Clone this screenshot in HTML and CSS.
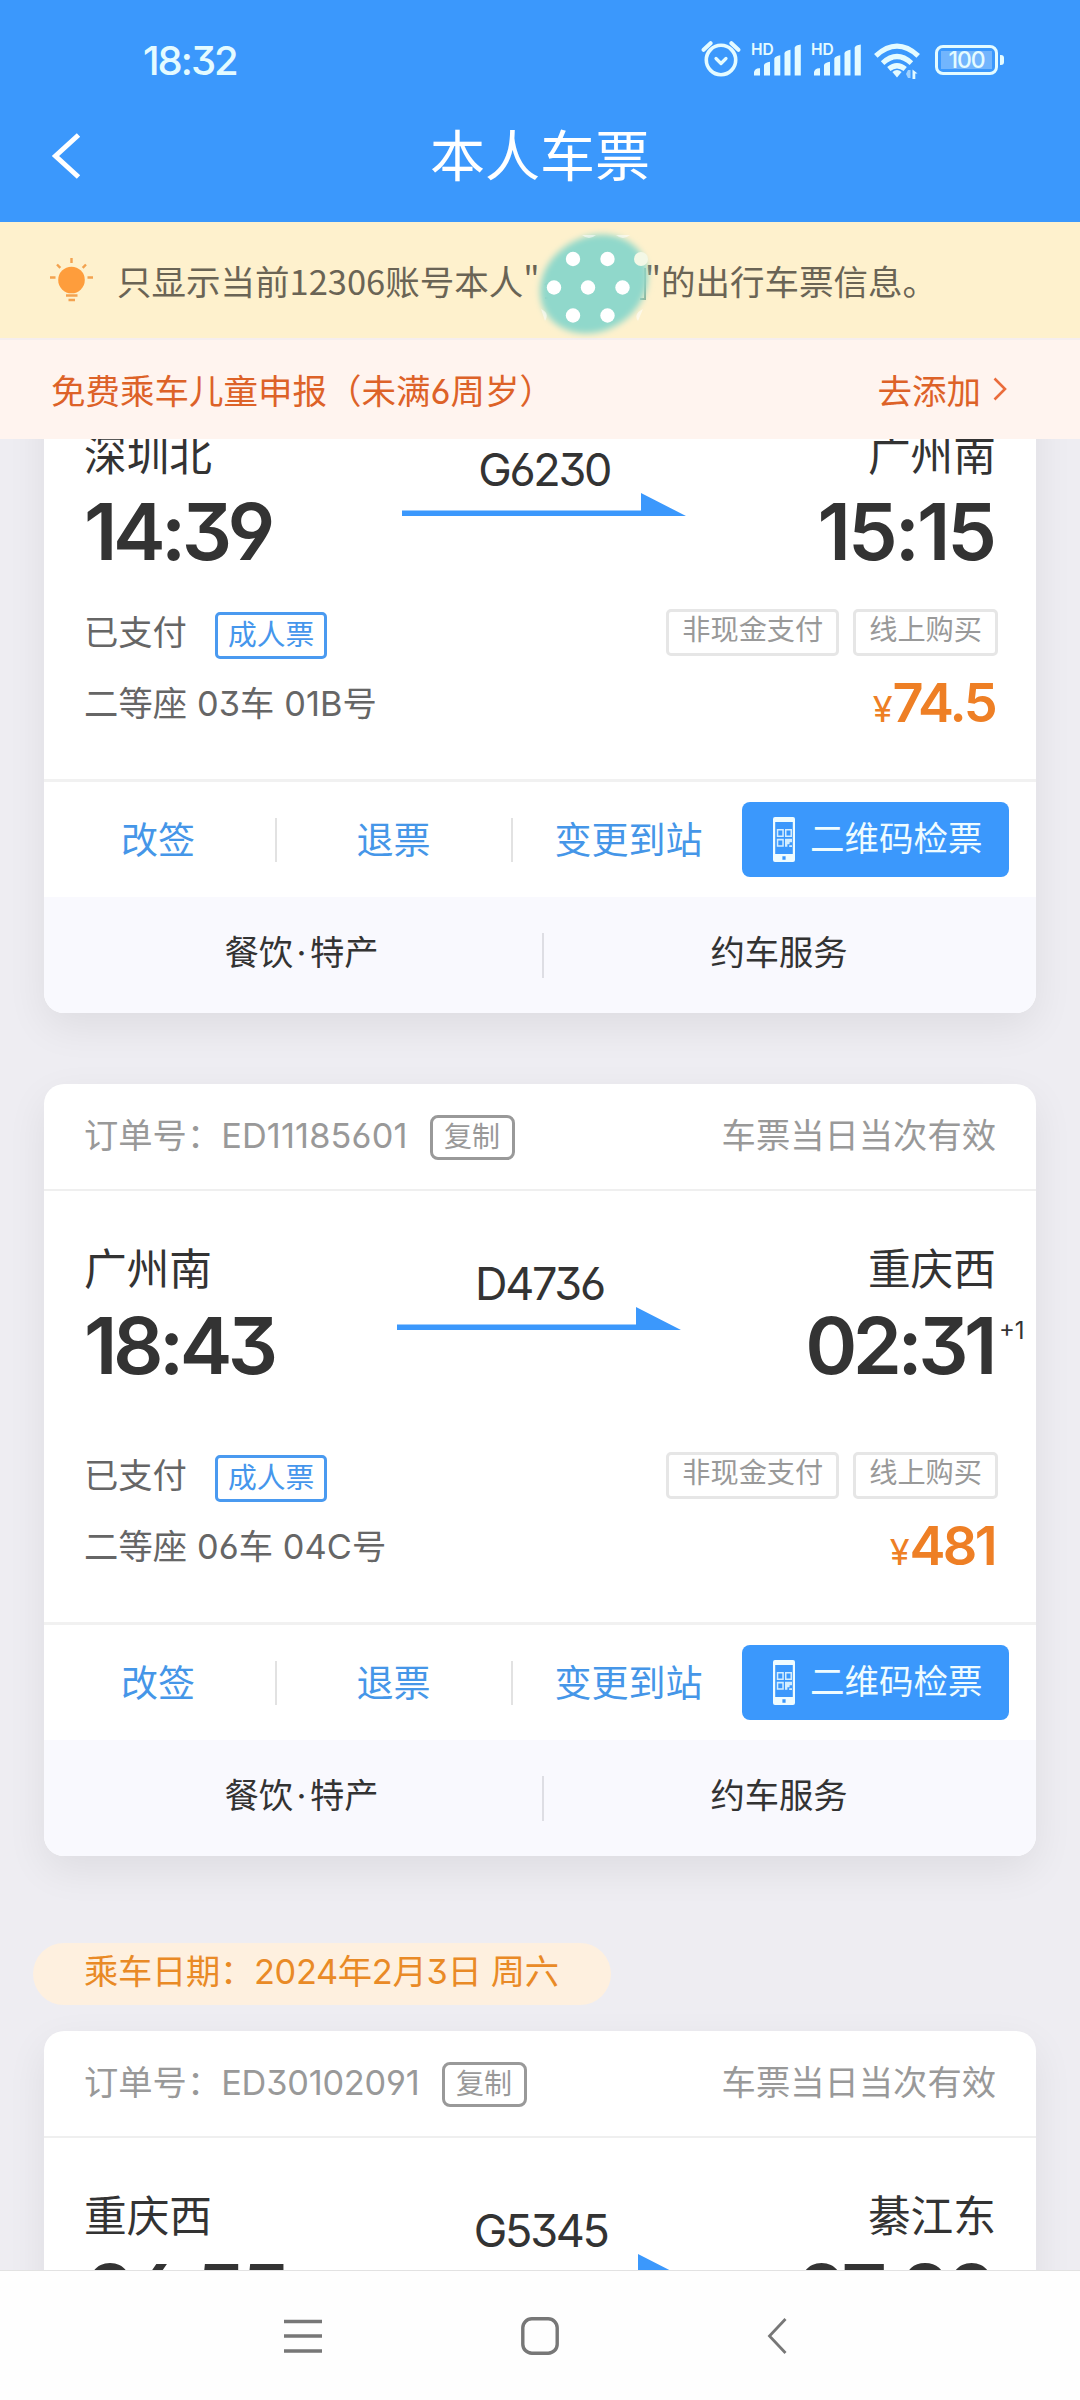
FILE: index.html
```html
<!DOCTYPE html>
<html lang="zh-CN">
<head>
<meta charset="utf-8">
<title>本人车票</title>
<link rel="stylesheet" href="styles.css">
</head>
<body>
<svg class="defs" width="0" height="0" aria-hidden="true">
  <symbol id="arrow" viewBox="0 0 284 23"><path d="M0 17.5h239V0l45 23H0z"/></symbol>
  <symbol id="phone" viewBox="0 0 22 45">
    <path fill-rule="evenodd" d="M2 0h18q2 0 2 2v41q0 2-2 2H2q-2 0-2-2V2q0-2 2-2zM2.2 5v32h17.6V5zM9.4 39.3v3.4h3.2v-3.4z"/>
    <path fill-rule="evenodd" d="M3.8 12h7v8h-7zM5.3 13.6v4.8h4v-4.8zM12 12h7v8h-7zM13.5 13.6v4.8h4v-4.8zM3.8 21.8h7v8h-7zM5.3 23.4v4.8h4v-4.8zM12 21.8h7v3.4h-2.400v2H14.400v2.600H12zM16.200 28.200H19V30h-2.800z" opacity=".85"/>
  </symbol>
  <symbol id="signal" viewBox="0 0 48 32">
    <path d="M0 31.5v-3.5q1-3.8 5-3.8h1v7.300zM10 31.500V21q1-2.500 6-3.200v13.700zM20.300 31.500v-17q1-2.500 6-3.200v20.200zM30.500 31.500V9q1-2.500 6-3.200v25.700zM40.700 31.500V3.500Q41.500 1 46.800.5v31z"/>
  </symbol>
</svg>

<header class="top">
  <div class="status">
    <span class="clock">18:32</span>
    <div class="status-icons">
      <svg class="i-alarm" width="40" height="38" viewBox="0 0 40 38"><g fill="none" stroke="#e4fbff" stroke-linecap="round" stroke-linejoin="round"><circle cx="20" cy="21" r="14.700" stroke-width="3.600"/><path d="M2.600 10.800 9.600 4.200M37.400 10.800 30.400 4.200" stroke-width="4"/><path d="m15 19.500 5 5 5-5" stroke-width="3.200"/></g></svg>
      <span class="sim"><b>HD</b><svg width="48" height="32"><use href="#signal"/></svg></span>
      <span class="sim"><b>HD</b><svg width="48" height="32"><use href="#signal"/></svg></span>
      <svg class="i-wifi" width="48" height="36" viewBox="0 0 48 36"><g fill="none" stroke="#e4fbff" stroke-width="5.200"><path d="M1.800 12.800Q23 -6.500 44.200 12.800"/><path d="M8.600 20.100Q23 7 37.400 20.100"/><path d="M14.800 26Q23 19.500 31.200 26"/></g><path d="M23 34.500l-4.600-5.500q4.600-3.800 9.200 0z" fill="#e4fbff"/><path d="M36.500 27v8h-2.500l-2-4 2-4z" fill="#9fd2ff"/><path d="M38.500 36v-9.500l5 4h-2.200V36z" fill="#e4fbff"/></svg>
      <span class="battery"><i>100</i></span>
    </div>
  </div>
  <div class="titlebar">
    <svg class="back" width="32" height="46" viewBox="0 0 32 46"><path d="M29.500 2 6.500 23l23 21" fill="none" stroke="#fff" stroke-width="5"/></svg>
    <h1>本人车票</h1>
  </div>
</header>

<section class="notice">
  <svg width="44" height="46" viewBox="0 0 44 46"><circle cx="22.500" cy="23" r="13.300" fill="#fe9d3c"/><path d="M17 38.500h11.500M19.500 43h6.500M22.500 1v5M8 7.500l3.300 3.300M37 7.500l-3.300 3.300M1 20.500h5.500M38.500 20.500H44" fill="none" stroke="#f3a24f" stroke-width="2.400"/></svg>
  <p>只显示当前12306账号本人"<span class="masked"><svg width="124" height="112" viewBox="0 0 124 112"><defs><filter id="soft" x="-20%" y="-20%" width="140%" height="140%"><feGaussianBlur stdDeviation="3"/></filter></defs><path d="M13 57l9-7M13 70h8M113 40v31h-5" fill="none" stroke="#8fae93" stroke-width="2"/><ellipse cx="62" cy="56" rx="56" ry="47" transform="rotate(-30 62 56)" fill="#90d8cb" filter="url(#soft)"/><g fill="#fff"><circle cx="41" cy="31" r="7.200"/><circle cx="75.500" cy="31" r="7.200"/><circle cx="109" cy="31" r="7" fill="#f3f8e6"/><circle cx="22" cy="59.500" r="7.200"/><circle cx="56" cy="59.500" r="7.200"/><circle cx="90.500" cy="59.500" r="7.200"/><circle cx="41" cy="87.500" r="7.200"/><circle cx="75.500" cy="87.500" r="7.200"/><path d="M50 7q7 6 14 0zM84 7q7 6 14 0zM9 81q9 4 4 12zM111 81q-10 5-5 12z" opacity=".55"/></g></svg></span>"的出行车票信息。</p>
</section>

<section class="child-bar">
  <span>免费乘车儿童申报（未满6周岁）</span>
  <span class="add">去添加<svg width="15" height="24" viewBox="0 0 15 24"><path d="M1.500 1.500 12 12 1.500 22.500" fill="none" stroke="#ea6c3c" stroke-width="2.600"/></svg></span>
</section>

<main class="scroller">
  <article class="card first">
    <div class="journey">
      <div class="stop"><span class="station">深圳北</span><span class="time">14:39</span></div>
      <div class="train"><span>G6230</span><svg width="284" height="23"><use href="#arrow"/></svg></div>
      <div class="stop end"><span class="station">广州南</span><span class="time loose">15:15</span></div>
    </div>
    <div class="info">
      <span class="state">已支付</span><span class="tag blue">成人票</span>
      <span class="tags"><span class="tag">非现金支付</span><span class="tag">线上购买</span></span>
    </div>
    <div class="seat-row"><span class="seat">二等座 03车 01B号</span><span class="price"><small>¥</small>74.5</span></div>
    <div class="actions">
      <a class="act a1">改签</a><a class="act a2">退票</a><a class="act a3">变更到站</a>
      <a class="qr"><svg width="22" height="45"><use href="#phone"/></svg><span>二维码检票</span></a>
    </div>
    <div class="services"><a class="s1">餐饮<i>·</i>特产</a><a class="s2">约车服务</a></div>
  </article>

  <article class="card second">
    <div class="order"><span>订单号：<em>ED11185601</em></span><span class="copy">复制</span><span class="valid">车票当日当次有效</span></div>
    <div class="journey">
      <div class="stop"><span class="station">广州南</span><span class="time">18:43</span></div>
      <div class="train"><span>D4736</span><svg width="284" height="23"><use href="#arrow"/></svg></div>
      <div class="stop end"><span class="station">重庆西</span><span class="time">02:31<sup>+1</sup></span></div>
    </div>
    <div class="info roomy">
      <span class="state">已支付</span><span class="tag blue">成人票</span>
      <span class="tags"><span class="tag">非现金支付</span><span class="tag">线上购买</span></span>
    </div>
    <div class="seat-row"><span class="seat">二等座 06车 04C号</span><span class="price"><small>¥</small>481</span></div>
    <div class="actions">
      <a class="act a1">改签</a><a class="act a2">退票</a><a class="act a3">变更到站</a>
      <a class="qr"><svg width="22" height="45"><use href="#phone"/></svg><span>二维码检票</span></a>
    </div>
    <div class="services"><a class="s1">餐饮<i>·</i>特产</a><a class="s2">约车服务</a></div>
  </article>

  <div class="date"><span>乘车日期：2024年2月3日 周六</span></div>

  <article class="card third">
    <div class="order"><span>订单号：<em>ED30102091</em></span><span class="copy">复制</span><span class="valid">车票当日当次有效</span></div>
    <div class="journey">
      <div class="stop"><span class="station">重庆西</span><span class="time">06:55</span></div>
      <div class="train"><span>G5345</span><svg width="284" height="23"><use href="#arrow"/></svg></div>
      <div class="stop end"><span class="station">綦江东</span><span class="time">07:20</span></div>
    </div>
  </article>
</main>

<nav class="sysnav">
  <svg width="38" height="34" viewBox="0 0 38 34"><path d="M0 2.500h38M0 17h38M0 32h38" stroke="#777" stroke-width="3.400"/></svg>
  <svg width="38" height="38" viewBox="0 0 38 38"><rect x="1.800" y="1.800" width="34.400" height="34.400" rx="9" fill="none" stroke="#777" stroke-width="3.400"/></svg>
  <svg width="20" height="36" viewBox="0 0 20 36"><path d="M18.500 1 2.500 18l16 17" fill="none" stroke="#777" stroke-width="2.800"/></svg>
</nav>
</body>
</html>
```
FILE: styles.css
```css
* { box-sizing: border-box; }
body {
  margin: 0;
  width: 1080px;
  height: 2400px;
  overflow: hidden;
  background: #eeedf2;
  font-family: Inter, "Noto Sans CJK SC", sans-serif;
  font-feature-settings: "cv09", "cv03", "cv04";
  font-size: 34.3px;
  color: #333;
  white-space: nowrap;
}
svg { display: block; flex: none; }
.defs { position: absolute; }

.top { height: 222px; background: #3b98fc; color: #fff; }
.status { display: flex; justify-content: space-between; height: 90px; padding: 30px 76px 0 143px; }
.clock { font-size: 40px; font-weight: 500; line-height: 61px; color: #e4fbff; letter-spacing: -2px; }
.status-icons { display: flex; align-items: flex-start; padding-top: 10px; }
.i-alarm { margin: -1px 13px 0 0; }
.sim { display: block; width: 48px; height: 38px; margin-right: 12px; padding-top: 4px; position: relative; fill: #e4fbff; }
.sim b { position: absolute; left: -3px; top: 3px; font-size: 15.500px; line-height: 14px; font-weight: 600; color: #e4fbff; }
.i-wifi { margin: 3px 13px 0 0; }
.battery { position: relative; width: 63px; height: 30px; margin: 5px 6px 0 0; border: 3px solid #e4fbff; border-radius: 8px; padding: 3px; }
.battery i { display: block; height: 18px; line-height: 18px; background: #72b5fd; font-style: normal; font-size: 23px; font-weight: 500; letter-spacing: -1px; text-align: center; color: #e4fbff; }
.battery::after { content: ""; position: absolute; right: -9px; top: 7px; width: 4px; height: 10px; border-radius: 0 3px 3px 0; background: #e4fbff; }
.titlebar { display: grid; grid-template-columns: 120px 1fr 120px; align-items: center; height: 131px; }
.back { margin-left: 49px; }
h1 { margin: 0; text-align: center; font-size: 55px; line-height: 80px; font-weight: 400; }

.notice { display: flex; align-items: center; height: 118px; padding: 0 49px 1px; background: #fef1cd; border-bottom: 2px solid #f5eeee; color: #6a6455; }
.notice p { margin: 0 0 0 24px; font-family: "Noto Sans CJK SC", sans-serif; font-size: 34.500px; line-height: 50px; }
.masked { display: inline-block; position: relative; width: 105px; }
.masked svg { position: absolute; left: -8px; top: -67px; }

.child-bar { display: flex; justify-content: space-between; align-items: center; height: 99px; padding: 0 72px 2px 51px; background: #fff4ef; color: #dd6228; }
.child-bar span { font-size: 34.500px; }
.add { display: flex; align-items: center; gap: 12px; }

.scroller { display: flow-root; height: 1831px; overflow: hidden; }
.card { width: 992px; margin: 0 44px; background: #fff; border-radius: 20px; box-shadow: 0 14px 40px rgba(0, 0, 0, .07); overflow: hidden; }
.card.first { margin-top: -62px; }
.card.second { margin-top: 71px; }

.order { display: flex; align-items: center; height: 107px; padding: 0 40px 7px 40px; border-bottom: 2px solid #efefef; color: #999; }
.order em { font-style: normal; letter-spacing: .15px; }
.third .order em { letter-spacing: -.2px; }
.copy { margin: 8px 0 0 22px; width: 85px; height: 45px; border: 3px solid #999; border-radius: 8px; font-size: 28px; line-height: 38px; text-align: center; }
.valid { margin-left: auto; }

.journey { display: flex; justify-content: space-between; align-items: flex-start; padding: 51px 40px 0; height: 203px; }
.stop { display: flex; flex-direction: column; }
.stop.end { align-items: flex-end; }
.station { font-size: 42.700px; line-height: 55px; }
.time { position: relative; font-size: 79px; font-weight: 600; line-height: 97px; letter-spacing: -4.500px; }
.stop.end .time { margin-right: 3px; }
.stop.end .time.loose { letter-spacing: -3px; margin-right: 2px; }
.time sup { position: absolute; left: 100%; top: 20px; margin-left: 6px; font-size: 24px; line-height: 28px; font-weight: 400; letter-spacing: 0; }
.train { display: flex; flex-direction: column; align-items: center; margin-top: 17px; fill: #3b98fc; font-size: 45px; line-height: 48px; letter-spacing: -2.300px; }
.train span { position: relative; top: 1px; }

.info { display: flex; align-items: center; height: 48px; margin-top: 28px; padding: 0 38px 0 40px; color: #666; }
.state { margin-top: -5px; }
.info.roomy { margin-top: 57px; }
.tag { display: block; height: 47px; padding: 0 13px; border: 3px solid #e6e6e6; border-radius: 5px; font-size: 28.200px; line-height: 37px; color: #999; }
.tag.blue { margin: 6px 0 0 28px; padding: 0 10px; border-color: #4a9af0; color: #4596ec; line-height: 40px; font-size: 28.800px; }
.tags { display: flex; gap: 14px; margin-left: auto; }

.seat-row { display: flex; justify-content: space-between; margin-top: 16px; padding: 0 40px; height: 60px; line-height: 64px; color: #666; }
.seat { letter-spacing: .1px; }
.price { font-size: 54px; font-weight: 600; line-height: 61px; color: #ee7f25; letter-spacing: -2.600px; margin-right: 1px; }
.price small { font-size: 36px; font-weight: 400; letter-spacing: 0; }

.actions { display: flex; align-items: center; height: 118px; margin-top: 47px; border-top: 3px solid #f1f1f1; color: #4596e8; }
.act { height: 44px; line-height: 45px; font-size: 37px; text-align: center; border-right: 2px solid #e2e2e2; }
.a1 { width: 233px; padding-right: 3px; }
.a2 { width: 236px; padding-right: 1px; }
.a3 { width: 229px; border: 0; padding-left: 2px; }
.qr { display: flex; align-items: center; width: 267px; height: 75px; margin-top: -1px; padding-left: 31px; border-radius: 8px; background: #3b98fc; color: #effcff; fill: #effcff; font-size: 34.500px; gap: 15px; }
.qr span { margin-top: -7px; }
.services { display: flex; align-items: center; height: 116px; background: #f9f9fe; }
.services a { height: 45px; line-height: 40px; text-align: center; }
.services i { padding: 0 3.500px; font-style: normal; }
.s1 { width: 500px; padding-left: 17px; border-right: 2px solid #dedee4; }
.s2 { flex: 1; padding-right: 22px; }

.date { display: flex; align-items: center; width: 578px; height: 62px; margin: 87px 0 26px 33px; padding: 0 0 10px 51px; border-radius: 31px; background: #fef0df; color: #e98a26; letter-spacing: -.3px; }

.sysnav { display: grid; grid-template-columns: repeat(3, 237px); justify-content: center; justify-items: center; align-items: center; height: 130px; background: #fefefe; border-top: 1px solid #e2e2e2; }
```
